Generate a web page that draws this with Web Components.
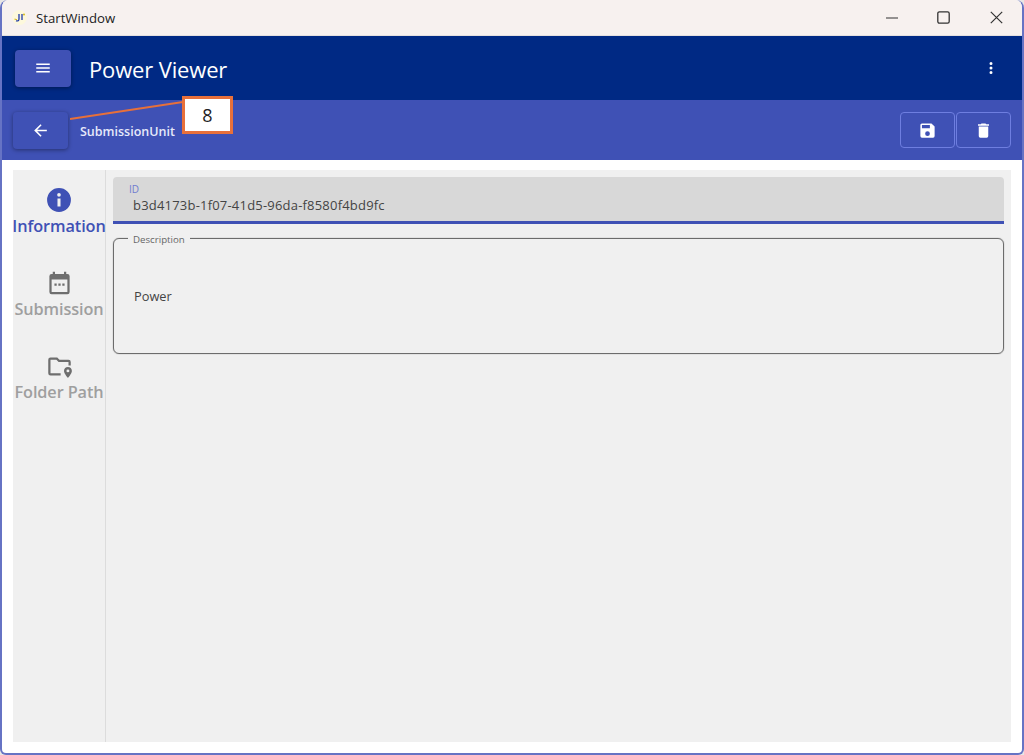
<!DOCTYPE html>
<html lang="en">
<head>
<meta charset="utf-8">
<title>StartWindow</title>
<style>
html,body{margin:0;padding:0;width:1024px;height:755px;overflow:hidden;background:#e8e6e4;font-family:"Open Sans","Noto Sans",sans-serif}
</style>
</head>
<body>
<app-window>
  <title-bar slot="title" caption="StartWindow"></title-bar>
  <app-header slot="header" caption="Power Viewer"></app-header>
  <sub-header slot="sub" caption="SubmissionUnit"></sub-header>
  <detail-panel slot="body"></detail-panel>
  <call-out slot="over" label="8"></call-out>
</app-window>
<script>
function def(name, html){
  customElements.define(name, class extends HTMLElement{
    connectedCallback(){
      if(this.shadowRoot) return;
      const r=this.attachShadow({mode:'open'});
      const attrs={};
      for(const a of this.attributes) attrs[a.name]=a.value;
      r.innerHTML=typeof html==='function'?html(attrs):html;
    }
  });
}
const ic=(d,s=24,vb='0 0 24 24')=>`<svg width="${s}" height="${s}" viewBox="${vb}" fill="currentColor" aria-hidden="true"><path d="${d}"/></svg>`;

def('app-window',`<style>
:host{display:block;position:relative;width:1024px;height:755px;box-sizing:border-box}
.frame{position:absolute;inset:0;box-sizing:border-box;border:solid #6673c4;border-width:0 2px 2px 2px;border-radius:8px 8px 6px 6px;background:#fff;overflow:hidden;display:flex;flex-direction:column}
.body{flex:1;min-height:0;display:flex}
</style><div class="frame"><slot name="title"></slot><slot name="header"></slot><slot name="sub"></slot><div class="body"><slot name="body"></slot></div></div><slot name="over"></slot>`);

def('title-bar',a=>`<style>
:host{display:flex;align-items:center;height:36px;box-sizing:border-box;background:#f7f1ef;border-bottom:1px solid #e4e0df;color:#222;font:13.2px "Open Sans",sans-serif}
.logo{width:15px;height:15px;margin:0 9px 0 10px;border-radius:50%;background:#fdf8dc;display:flex;align-items:center;justify-content:center}
.cap{flex:1}
.btn{width:52px;height:36px;display:flex;align-items:center;justify-content:center;color:#333}
</style>
<span class="logo"><svg width="13" height="13" viewBox="0 0 13 13" fill="none"><path d="M9 3v6" stroke="#1f3aa8" stroke-width="1.3"/><path d="M6 3v5q0 2.500-3 1.800" stroke="#1f3aa8" stroke-width="1.3"/><path d="M1.500 8l2.500.800" stroke="#d6b820" stroke-width="1.200"/><circle cx="11" cy="3.500" r="1" fill="#d6b820"/></svg></span>
<span class="cap">${a.caption}</span>
<span class="btn"><svg width="12" height="12" viewBox="0 0 12 12"><path d="M0 6h12" stroke="currentColor" stroke-width="1.100"/></svg></span>
<span class="btn" style="width:50px"><svg width="13" height="13" viewBox="0 0 13 13" fill="none"><rect x=".8" y=".8" width="11.400" height="11.400" rx="1.600" stroke="currentColor" stroke-width="1.300"/></svg></span>
<span class="btn" style="margin-left:2px"><svg width="13" height="13" viewBox="0 0 13 13"><path d="M.8.8l11.400 11.400M12.200.8L.8 12.200" stroke="currentColor" stroke-width="1.200"/></svg></span>`);

def('raised-button',`<style>
:host{display:flex;align-items:center;justify-content:center;background:#3f51b5;border-radius:4px;color:#fff;box-shadow:0 1px 4px rgba(0,0,0,.4)}
</style><slot></slot>`);

def('outline-button',`<style>
:host{display:flex;align-items:center;justify-content:center;width:55px;height:36px;box-sizing:border-box;border:1px solid #6e7ee0;border-radius:4px;color:#fff}
</style><slot></slot>`);

def('app-header',a=>`<style>
:host{display:flex;align-items:center;height:64px;background:#002984;color:#fff;box-sizing:border-box;padding-left:13px}
raised-button{width:56px;height:37px}
.t{flex:1;margin-left:18px;margin-top:1px;font:22px/30px "Open Sans",sans-serif;letter-spacing:-.15px}
.m{margin-right:22px;display:flex}
</style>
<raised-button>${ic('M3 6h18v2H3zM3 11h18v2H3zM3 16h18v2H3z',18)}</raised-button>
<span class="t">${a.caption}</span>
<span class="m">${ic('M12 16a2 2 0 1 1 0 4 2 2 0 0 1 0-4zm0-6a2 2 0 1 1 0 4 2 2 0 0 1 0-4zm0-6a2 2 0 1 1 0 4 2 2 0 0 1 0-4z',18)}</span>`);

def('sub-header',a=>`<style>
:host{display:flex;align-items:center;height:60px;background:#3f51b5;color:#fff;box-sizing:border-box;padding-left:11px;padding-right:11px}
raised-button{width:55px;height:37px}
.t{flex:1;margin-left:12px;margin-top:3px;font:600 12.500px/16px "Open Sans",sans-serif;color:#e6e9fa}
</style>
<raised-button>${ic('M20 11H7.830l5.590-5.590L12 4l-8 8 8 8 1.410-1.410L7.830 13H20z',19)}</raised-button>
<span class="t">${a.caption}</span>
<outline-button>${ic('M17 3H5a2 2 0 0 0-2 2v14a2 2 0 0 0 2 2h14a2 2 0 0 0 2-2V7l-4-4zm-5 16a3 3 0 1 1 0-6 3 3 0 0 1 0 6zm3-10H5V5h10v4z',19)}</outline-button>
<outline-button style="margin-left:1px">${ic('M6 19a2 2 0 0 0 2 2h8a2 2 0 0 0 2-2V7H6v12zM19 4h-3.500l-1-1h-5l-1 1H5v2h14V4z',19)}</outline-button>`);

def('nav-item',a=>`<style>
:host{display:flex;flex-direction:column;align-items:center;color:#9f9f9f;height:83px;font:600 16.300px/22px "Open Sans",sans-serif;letter-spacing:-.1px;white-space:nowrap}
:host([active]){color:#3f51b5}
.i{height:32px;display:flex;align-items:center;justify-content:center;color:#6e6e6e}
:host([active]) .i{color:#3f51b5}
.l{margin-top:-1px}
</style><span class="i"><slot></slot></span><span class="l">${a.label}</span>`);

def('side-nav',`<style>
:host{display:flex;flex-direction:column;width:93px;flex:none;box-sizing:border-box;padding-top:14px;border-right:1px solid #dcdcdc}
</style><slot></slot>`);

def('filled-field',a=>`<style>
:host{display:block;height:47px;box-sizing:border-box;background:#d8d8d8;border-radius:4px 4px 0 0;border-bottom:3px solid #3f51b5;padding:6px 0 0 16px;font-family:"Open Sans",sans-serif}
.l{display:block;font-size:10px;line-height:12px;color:#6f7dd0}
.v{display:block;padding-left:4px;margin-top:2px;font-size:13px;line-height:17px;color:#444;letter-spacing:.2px}
</style><span class="l">${a.label}</span><span class="v">${a.value}</span>`);

def('outlined-area',a=>`<style>
:host{display:block;position:relative;height:116px;box-sizing:border-box;border:1px solid #6c6c6c;box-shadow:0 0 1px #6c6c6c;border-radius:6px;font-family:"Open Sans",sans-serif}
.l{position:absolute;left:14px;top:-6px;padding:0 5px;background:#f0f0f0;font-size:9.700px;line-height:13px;color:#666}
.v{display:flex;align-items:center;height:100%;padding-left:20px;font-size:12.800px;color:#444}
</style><span class="l">${a.label}</span><span class="v">${a.value}</span>`);

def('detail-panel',`<style>
:host{display:flex;flex:1;min-width:0;box-sizing:border-box;margin:10px 11px 11px 11px;background:#f0f0f0}
.main{flex:1;min-width:0;display:flex;flex-direction:column;gap:14px;padding:7px 7px 0 7px}
</style>
<side-nav>
  <nav-item active label="Information">${ic('M12 1a11 11 0 1 0 0 22 11 11 0 0 0 0-22zm1.400 17h-2.800v-7.500h2.800V18zM12 8.900a1.700 1.700 0 1 1 0-3.400 1.700 1.700 0 0 1 0 3.400z',26)}</nav-item>
  <nav-item label="Submission">${ic('M19 4h-1V2h-2v2H8V2H6v2H5a2 2 0 0 0-2 2v14a2 2 0 0 0 2 2h14a2 2 0 0 0 2-2V6a2 2 0 0 0-2-2zm0 16H5V9h14v11zM7.500 12.500h2v2h-2zm3.500 0h2v2h-2zm3.500 0h2v2h-2z',27,'0 0.500 24 24')}</nav-item>
  <nav-item label="Folder Path">${ic('M4 4h6l2 2h8a2 2 0 0 1 2 2v3h-2V8h-8.800l-2-2H4v12h9v2H4a2 2 0 0 1-2-2V6a2 2 0 0 1 2-2zm15.500 8.500c-2 0-3.500 1.500-3.500 3.400 0 2.400 3.500 6.100 3.500 6.100s3.500-3.700 3.500-6.100c0-1.900-1.500-3.400-3.500-3.400zm0 4.700a1.300 1.300 0 1 1 0-2.600 1.300 1.300 0 0 1 0 2.600z',27)}</nav-item>
</side-nav>
<div class="main">
  <filled-field label="ID" value="b3d4173b-1f07-41d5-96da-f8580f4bd9fc"></filled-field>
  <outlined-area label="Description" value="Power"></outlined-area>
</div>`);

def('call-out',a=>`<style>
:host{position:absolute;left:70px;top:96px;width:163px;height:38px;display:block}
svg{position:absolute;left:0;top:0}
.b{position:absolute;left:112px;top:0;width:51px;height:38px;box-sizing:border-box;border:3px solid #e8703a;background:#fff;color:#222;display:flex;align-items:center;justify-content:center;font:18px "Open Sans",sans-serif}
</style>
<svg width="113" height="30" viewBox="0 0 113 30"><path d="M0 23L113 6" stroke="#e8703a" stroke-width="2"/></svg>
<div class="b">${a.label}</div>`);
</script>
</body>
</html>
